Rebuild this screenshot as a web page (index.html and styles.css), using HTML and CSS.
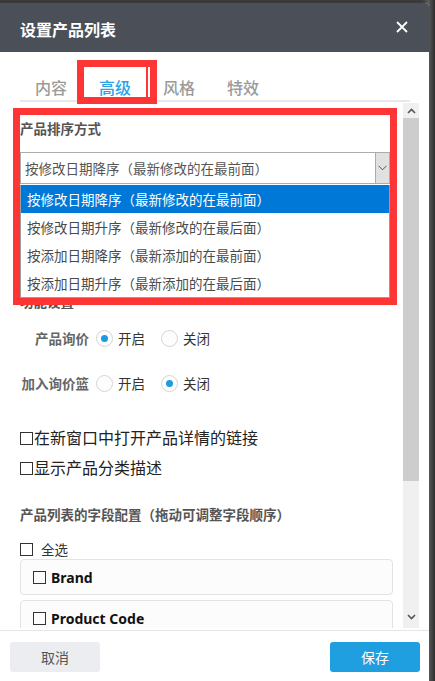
FILE: index.html
```html
<!DOCTYPE html>
<html lang="zh-CN">
<head>
    <meta charset="UTF-8">
    <meta name="viewport" content="width=device-width, initial-scale=1.0">
    <title>设置产品列表</title>
    <link rel="stylesheet" href="styles.css">
</head>
<body>
    <div class="dialog">
        <!-- En-tête de la fenêtre -->
        <div class="dialog-header">
            <h1 class="dialog-title">设置产品列表</h1>
            <span class="dialog-close">
                <svg width="12" height="12" viewBox="0 0 12 12"><path d="M1 1L11 11M11 1L1 11" stroke="#fff" stroke-width="1.8" fill="none"/></svg>
            </span>
        </div>

        <div class="tabs">
            <span class="tab">内容</span>
            <span class="tab active">高级</span>
            <span class="tab">风格</span>
            <span class="tab">特效</span>
        </div>

        <div class="dialog-body">
            <div class="body-main">
                <div class="section-title">产品排序方式</div>
                <div class="select-wrap">
                    <div class="select-box">
                        <span class="select-value">按修改日期降序（最新修改的在最前面）</span>
                        <span class="select-arrow">
                            <svg width="9" height="6" viewBox="0 0 9 6"><path d="M0.5 0.8L4.5 4.8L8.5 0.8" stroke="#555" stroke-width="1" fill="none"/></svg>
                        </span>
                    </div>
                    <ul class="dropdown">
                        <li class="selected">按修改日期降序（最新修改的在最前面）</li>
                        <li>按修改日期升序（最新修改的在最后面）</li>
                        <li>按添加日期降序（最新添加的在最前面）</li>
                        <li>按添加日期升序（最新添加的在最后面）</li>
                    </ul>
                </div>

                <div class="section-title func-title">功能设置</div>
                <div class="radio-row first">
                    <span class="radio-label">产品询价</span>
                    <span class="radio checked"></span><span class="radio-text">开启</span>
                    <span class="radio"></span><span class="radio-text">关闭</span>
                </div>
                <div class="radio-row">
                    <span class="radio-label">加入询价篮</span>
                    <span class="radio"></span><span class="radio-text">开启</span>
                    <span class="radio checked"></span><span class="radio-text">关闭</span>
                </div>

                <div class="check-line first"><span class="check"></span>在新窗口中打开产品详情的链接</div>
                <div class="check-line"><span class="check"></span>显示产品分类描述</div>

                <div class="section-title fields-title">产品列表的字段配置（拖动可调整字段顺序）</div>
                <div class="select-all"><span class="check"></span>全选</div>
                <div class="field-item"><span class="check"></span>Brand</div>
                <div class="field-item"><span class="check"></span>Product Code</div>
            </div>

            <div class="scrollbar">
                <span class="scroll-arrow">
                    <svg width="9" height="6" viewBox="0 0 9 6"><path d="M1 5L4.5 1.5L8 5" stroke="#555" stroke-width="1.6" fill="none"/></svg>
                </span>
                <span class="scroll-thumb"></span>
                <span class="scroll-arrow bottom">
                    <svg width="9" height="6" viewBox="0 0 9 6"><path d="M1 1L4.5 4.5L8 1" stroke="#555" stroke-width="1.6" fill="none"/></svg>
                </span>
            </div>
        </div>

        <div class="dialog-footer">
            <button class="btn btn-cancel">取消</button>
            <button class="btn btn-save">保存</button>
        </div>

        <!-- Cadres rouges d'annotation -->
        <div class="mark mark-tab"></div>
        <div class="mark mark-sort"></div>
    </div>
</body>
</html>
```

FILE: styles.css
```css
body {
    margin: 0;
    padding: 0;
    height: 100vh;
    overflow: hidden;
    background: linear-gradient(90deg, #3a3a3a 0%, #3a3a3a 97%, #5a5a5a 98.5%, #2e2e2e 100%);
    font-family: "Noto Sans CJK SC", "Noto Sans", sans-serif;
    color: #333;
}

.dialog {
    position: relative;
    width: 429px;
    height: calc(100vh - 3px);
    margin-top: 3px;
    background-color: #fff;
    border-radius: 0 4px 0 0;
    display: flex;
    flex-direction: column;
    overflow: hidden;
}

.dialog-header {
    height: 49px;
    flex: none;
    background-color: #4b5058;
    display: flex;
    align-items: center;
    justify-content: space-between;
    padding: 0 21px 0 20px;
}

.dialog-title {
    margin: 0;
    font-size: 16px;
    font-weight: bold;
    color: #fff;
    line-height: 1;
    padding-top: 2px;
}

.dialog-close {
    display: flex;
    width: 12px;
    height: 12px;
    margin-top: -2px;
}

.tabs {
    flex: none;
    display: flex;
    margin: 0 19px 0 20px;
    padding-top: 22px;
    border-bottom: 2px solid #e8e8e8;
}

.tab {
    padding: 0 16px;
    font-size: 16px;
    font-weight: 500;
    line-height: 26px;
    color: #9a9a9a;
}

.tab:first-child {
    margin-left: -1px;
}

.tab.active {
    color: #2aa3e6;
}

.dialog-body {
    flex: none;
    height: 526px;
    display: flex;
    margin-bottom: 2px;
}

.body-main {
    flex: 1;
    overflow: hidden;
    padding: 16px 10px 0 20px;
}

.section-title {
    font-size: 13.5px;
    font-weight: bold;
    color: #555;
    line-height: 20px;
}

.select-wrap {
    position: relative;
    width: 370px;
    margin-top: 14px;
}

.select-box {
    height: 30px;
    border: 1px solid #acacac;
    display: flex;
    align-items: stretch;
}

.select-value {
    flex: 1;
    padding-left: 4px;
    font-size: 13.5px;
    line-height: 30px;
    color: #555;
}

.select-arrow {
    width: 13px;
    background-color: #e1e1e1;
    border-left: 1px solid #acacac;
    display: flex;
    align-items: center;
    justify-content: center;
}

.dropdown {
    position: absolute;
    top: calc(100% + 1px);
    left: 0;
    right: 0;
    margin: 0;
    padding: 0;
    list-style: none;
    background-color: #fff;
    border: 1px solid #9c9c9c;
    border-top: none;
}

.dropdown li {
    height: 28px;
    line-height: 28px;
    padding-left: 6px;
    font-size: 13.5px;
    color: #4a4a4a;
}

.dropdown li.selected {
    background-color: #0078d7;
    color: #fff;
}

.func-title {
    margin-top: 107px;
}

.radio-row {
    display: flex;
    align-items: center;
    height: 24px;
    margin-top: 21px;
    font-size: 13.5px;
}

.radio-row.first {
    margin-top: 15px;
}

.radio-label {
    width: 69px;
    text-align: right;
    font-weight: bold;
    color: #666;
    margin-right: 7px;
}

.radio {
    position: relative;
    width: 15px;
    height: 15px;
    border: 1px solid #d4d4d4;
    border-radius: 50%;
    background-color: #fdfdfd;
    margin-right: 5px;
}

.radio.checked::after {
    content: "";
    position: absolute;
    top: 4px;
    left: 4px;
    width: 7px;
    height: 7px;
    border-radius: 50%;
    background-color: #1e9be0;
}

.radio-text {
    color: #333;
    margin-right: 16px;
}

.check {
    display: inline-block;
    width: 11px;
    height: 11px;
    border: 1px solid #333;
    vertical-align: -1px;
    margin-right: 1px;
}

.check-line {
    font-size: 16px;
    line-height: 30px;
    color: #222;
}

.check-line.first {
    margin-top: 27px;
}

.fields-title {
    margin-top: 22px;
}

.select-all {
    margin-top: 15px;
    font-size: 13.5px;
    line-height: 20px;
    color: #333;
}

.select-all .check {
    margin-right: 8px;
}

.field-item {
    height: 34px;
    border: 1px solid #e3e3e3;
    border-radius: 4px;
    background-color: #fcfcfc;
    margin-bottom: 5px;
    padding-left: 12px;
    display: flex;
    align-items: center;
    font-family: "Noto Sans", sans-serif;
    font-size: 14px;
    font-weight: bold;
    color: #111;
}

.field-item .check {
    margin-right: 5px;
    vertical-align: 0;
}

.scrollbar {
    width: 16px;
    margin: 1px 10px 0 0;
    background-color: #f0f0f0;
    display: flex;
    flex-direction: column;
}

.scroll-arrow {
    height: 15px;
    display: flex;
    align-items: center;
    justify-content: center;
    flex: none;
}

.scroll-arrow.bottom {
    margin-top: auto;
    margin-bottom: 4px;
}

.scroll-thumb {
    height: 363px;
    background-color: #cdcdcd;
}

.dialog-footer {
    flex: 1;
    border-top: 1px solid #e5e5e5;
    display: flex;
    justify-content: space-between;
    align-items: flex-start;
    padding: 11px 9px 0 10px;
}

.btn {
    width: 90px;
    height: 30px;
    border: none;
    border-radius: 3px;
    font-family: "Noto Sans CJK SC", sans-serif;
    font-size: 14px;
    cursor: pointer;
}

.btn-cancel {
    background-color: #ebedf0;
    color: #555;
}

.btn-save {
    background-color: #1f9fe0;
    color: #fff;
}

.mark {
    position: absolute;
    border: 7px solid #fd3535;
    box-sizing: border-box;
}

.mark-tab {
    top: 57px;
    left: 77px;
    width: 80px;
    height: 44px;
}

/* double trait à droite du cadre de l'onglet */
.mark-tab::after {
    content: "";
    position: absolute;
    top: 0;
    bottom: 0;
    right: 2px;
    width: 2px;
    background-color: #fd3535;
}

.mark-sort {
    top: 105px;
    left: 13px;
    width: 384px;
    height: 197px;
}
```
